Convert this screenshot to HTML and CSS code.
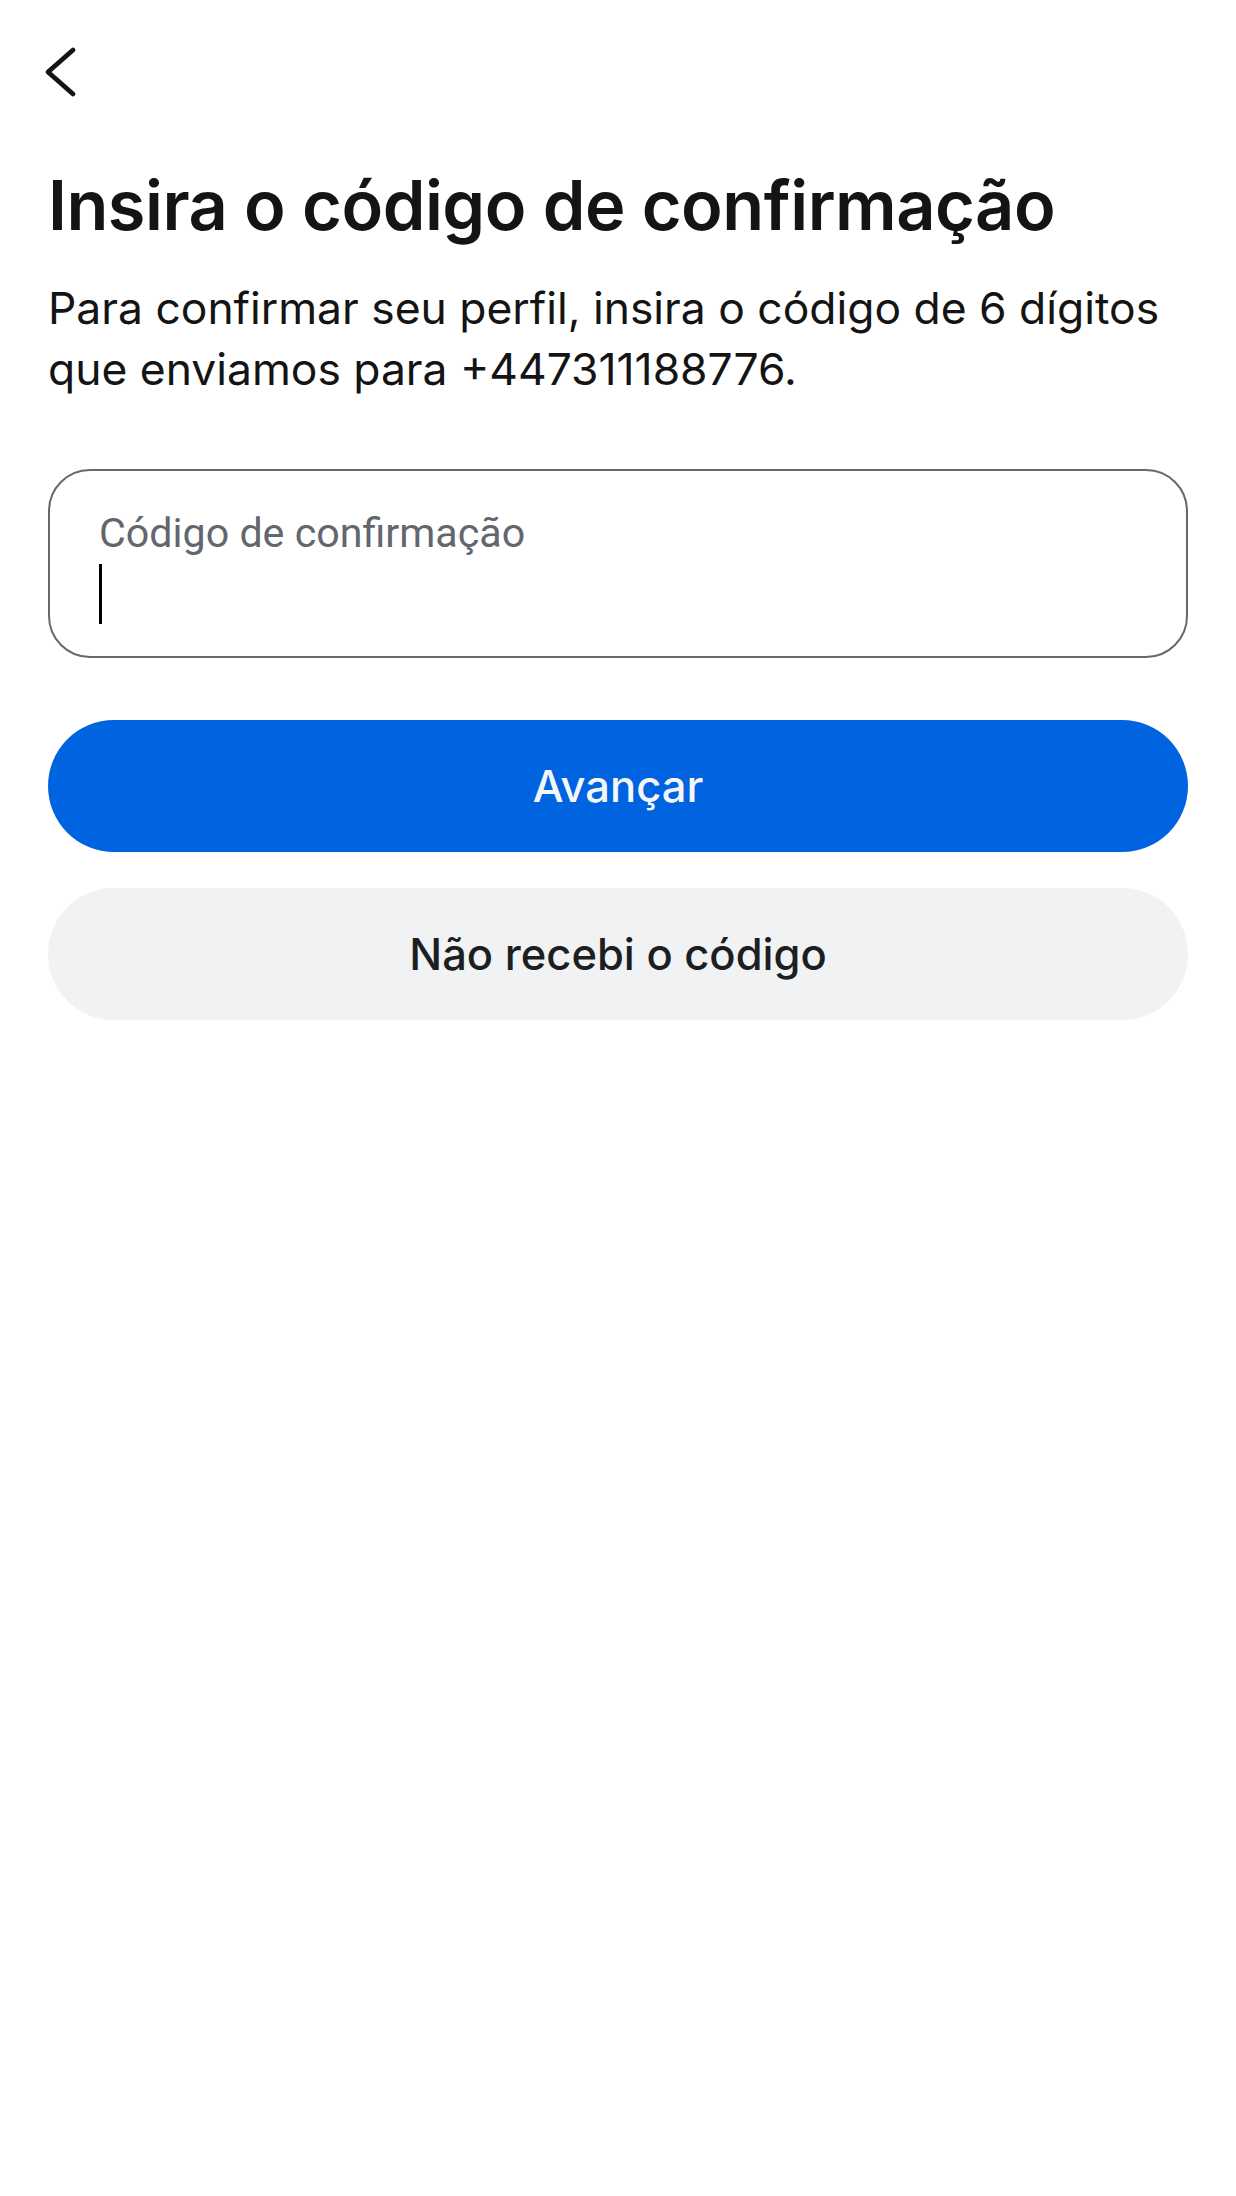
FILE: index.html
```html
<!DOCTYPE html>
<html lang="pt">
<head>
    <meta charset="UTF-8">
    <meta name="viewport" content="width=device-width, initial-scale=1.0">
    <title>Insira o código de confirmação</title>
    <link rel="stylesheet" href="styles.css">
</head>
<body>

    <div class="screen">
        <button class="back" aria-label="Voltar">
            <svg width="34" height="52" viewBox="0 0 34 52">
                <path d="M29 4 L4 26 L29 48" fill="none" stroke="#141414" stroke-width="4.8" stroke-linecap="round" stroke-linejoin="round"/>
            </svg>
        </button>

        <h1 class="title">Insira o código de confirmação</h1>
        <p class="intro">Para confirmar seu perfil, insira o código de 6 dígitos que enviamos para +447311188776.</p>

        <div class="field">
            <label for="codigo">Código de confirmação</label>
            <div class="field-input">
                <span class="caret"></span>
                <input type="text" id="codigo" inputmode="numeric">
            </div>
        </div>

        <div class="actions">
            <button class="btn btn-primary">Avançar</button>
            <button class="btn btn-secondary">Não recebi o código</button>
        </div>
    </div>

</body>
</html>
```

FILE: styles.css
```css
body {
    font-family: Inter, "Noto Sans", sans-serif;
    background-color: #fff;
    margin: 0;
    padding: 0;
    color: #141414;
}

.screen {
    padding: 0 48px;
}

.back {
    display: block;
    background: none;
    border: none;
    padding: 0;
    margin: 46px 0 0 -4px;
    width: 34px;
    height: 52px;
    cursor: pointer;
}

.back svg {
    display: block;
}

.title {
    font-size: 68.5px;
    font-weight: 600;
    letter-spacing: -0.5px;
    line-height: 86px;
    margin: 65px 0 0 0;
}

.intro {
    font-size: 44.4px;
    font-weight: 400;
    line-height: 61px;
    margin: 29px 0 0 0;
}

.field {
    margin-top: 69px;
    height: 189px;
    border: 2.5px solid #65686e;
    border-radius: 42px;
    box-sizing: border-box;
    padding: 37px 50px 0 49px;
}

.field label {
    display: block;
    font-family: Roboto, sans-serif;
    font-size: 41.2px;
    line-height: 50px;
    color: #62666d;
}

.field-input {
    position: relative;
    height: 70px;
    margin-top: 2px;
}

.field-input input {
    width: 100%;
    height: 100%;
    border: none;
    outline: none;
    background: transparent;
    font-size: 44px;
    padding: 0;
}

.caret {
    position: absolute;
    left: 0;
    top: 4px;
    width: 3px;
    height: 60px;
    background-color: #000;
}

.actions {
    display: flex;
    flex-direction: column;
    gap: 36px;
    margin-top: 62px;
}

.btn {
    height: 132px;
    border: none;
    border-radius: 66px;
    font-family: Inter, "Noto Sans", sans-serif;
    font-size: 43.5px;
    font-weight: 500;
    cursor: pointer;
}

.btn-primary {
    background-color: #0064e0;
    color: #f5f6f8;
}

.btn-secondary {
    background-color: #f1f2f4;
    color: #1c1e21;
}
```
